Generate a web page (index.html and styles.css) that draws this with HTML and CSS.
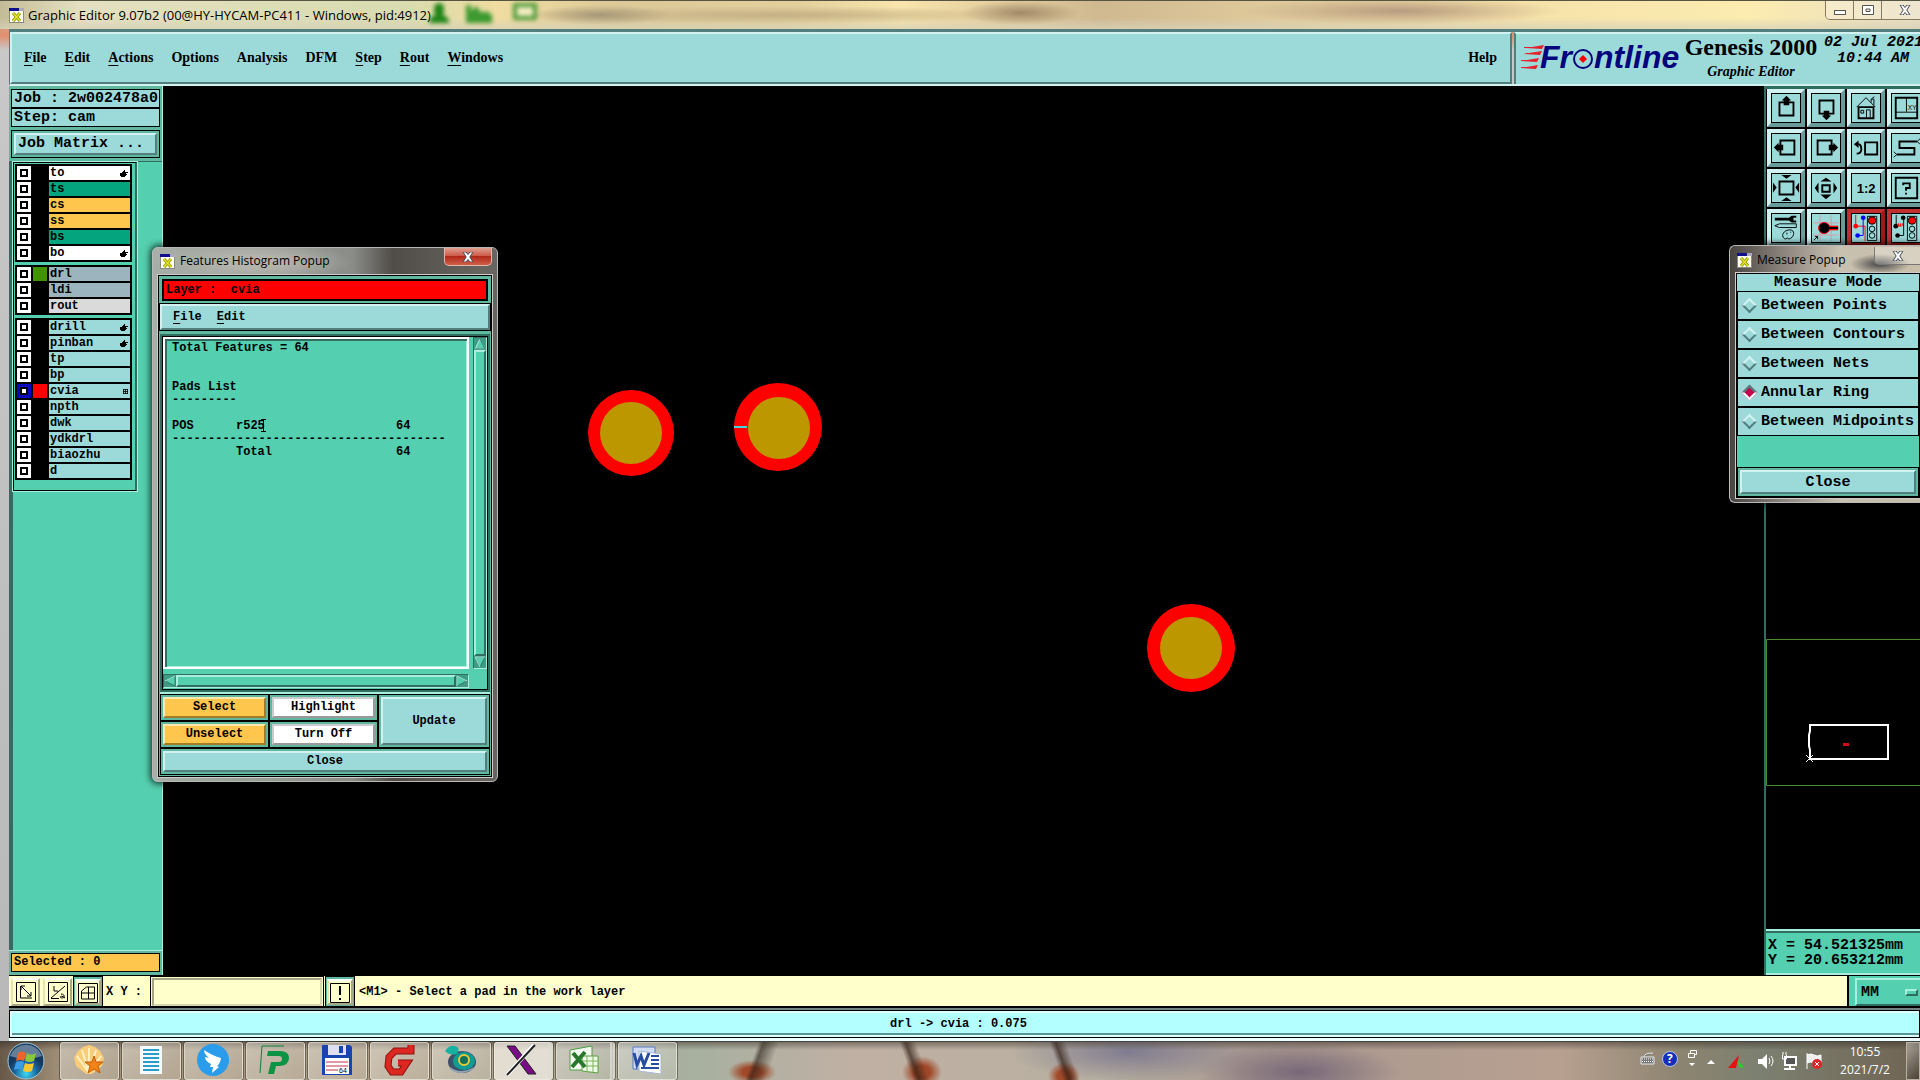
FILE: index.html
```html
<!DOCTYPE html>
<html lang="en">
<head>
  <meta charset="UTF-8">
  <meta name="viewport" content="width=device-width, initial-scale=1">
  <title>Graphic Editor 9.07b2</title>
  <link rel="stylesheet" href="styles.css">
</head>
<body>

<svg width="0" height="0" class="defs">
  <symbol id="xicon" viewBox="0 0 15 15">
    <rect x=".5" y=".5" width="14" height="14" fill="#fffff0" stroke="#888"/>
    <rect width="15" height="3" fill="#10108c"/>
    <rect x="10" width="5" height="3" fill="#aab"/>
    <path d="M4 5l7 8M11 5l-7 8" stroke="#8a8a00" stroke-width="3"/>
    <path d="M4 5l7 8M11 5l-7 8" stroke="#e6e620" stroke-width="1.5"/>
  </symbol>
  <symbol id="hand" viewBox="0 0 9 9">
    <path d="M1 4h2V3h1V2h1V1h1v2h3v1H7v1h1v1H7v1H6v1H2V7H1z"/>
  </symbol>
  <symbol id="cross" viewBox="0 0 12 10">
    <path d="M1 0h3l2 2.500L8 0h3L7.800 5 11 10H8L6 7.500 4 10H1l3.200-5z" fill="#fff" stroke="#444b58"/>
  </symbol>
</svg>

<main class="window">
  <header class="titlebar">
    <svg class="backdrop" width="112" height="28" viewBox="0 0 112 28">
      <path d="M5 8q0-6 5-6t5 6-2 6q7 1 7 8H0q0-7 7-8-2 0-2-6z" fill="#1f8418"/>
      <path d="M37 4v18h26v-8l-6-4-4 2-6-7-5 5V4z" fill="#3c9a30"/>
      <path d="M86 4h20v13H86z" fill="#f4ecc0" stroke="#4c9c3c" stroke-width="4"/>
    </svg>
    <svg class="xicon"><use href="#xicon"/></svg>
    <h1>Graphic Editor 9.07b2 (00@HY-HYCAM-PC411 - Windows, pid:4912)</h1>
    <div class="winbuttons">
      <button aria-label="Minimize"><svg width="12" height="10"><rect x=".5" y="5.500" width="11" height="4" fill="#fff" stroke="#555"/></svg></button>
      <button aria-label="Maximize"><svg width="12" height="10"><path d="M.5.5h11v9H.5zM4 4v2.500h4V4z" fill="#fff" stroke="#555" fill-rule="evenodd"/></svg></button>
      <button aria-label="Close" class="wide"><svg width="12" height="10"><use href="#cross"/></svg></button>
    </div>
  </header>

  <div class="app">
    <div class="top">
      <nav class="menubar">
        <a href="#"><u>F</u>ile</a>
        <a href="#"><u>E</u>dit</a>
        <a href="#"><u>A</u>ctions</a>
        <a href="#">O<u>p</u>tions</a>
        <a href="#">Analysis</a>
        <a href="#">DFM</a>
        <a href="#"><u>S</u>tep</a>
        <a href="#"><u>R</u>out</a>
        <a href="#"><u>W</u>indows</a>
        <a href="#" class="help">Help</a>
      </nav>
      <div class="brand">
        <svg class="logo" width="162" height="40" viewBox="0 0 162 40">
          <g fill="#e8202c"><path d="M6 9l18-3-2 4zM3 15l19-3-2 4zM1 22l18-3-2 4zM1 29l17-3-2 4z"/></g>
          <g stroke="#e8202c"><path d="M4 8.500h18M6 14.500h14M1 21.500h16M1 28.500h15"/></g>
          <text x="20" y="29" class="logo-text">Fr</text>
          <circle cx="63" cy="20" r="9" fill="none" stroke="#04047c" stroke-width="2"/>
          <path d="M63 16l4 4-4 4-4-4z" fill="#f00"/>
          <text x="74" y="29" class="logo-text">ntline</text>
        </svg>
        <div class="product"><b>Genesis 2000</b><i>Graphic Editor</i></div>
        <div class="date"><span>02 Jul 2021</span><span>10:44 AM</span></div>
      </div>
    </div>

    <div class="middle">
      <aside class="sidebar">
        <div class="job">
          <div class="field">Job : 2w002478a0</div>
          <div class="field">Step: cam</div>
          <div class="matrix"><button>Job Matrix ...</button></div>
        </div>
        <div class="well">
          <div class="layers">
            <div class="group">
              <label class="layer"><input type="checkbox"><i></i><span class="white">to<svg><use href="#hand"/></svg></span></label>
              <label class="layer"><input type="checkbox"><i></i><span class="green">ts</span></label>
              <label class="layer"><input type="checkbox"><i></i><span class="orange">cs</span></label>
              <label class="layer"><input type="checkbox"><i></i><span class="orange">ss</span></label>
              <label class="layer"><input type="checkbox"><i></i><span class="green">bs</span></label>
              <label class="layer"><input type="checkbox"><i></i><span class="white">bo<svg><use href="#hand"/></svg></span></label>
            </div>
            <div class="group">
              <label class="layer"><input type="checkbox"><i class="on-green"></i><span class="slate">drl</span></label>
              <label class="layer"><input type="checkbox"><i></i><span class="slate">ldi</span></label>
              <label class="layer"><input type="checkbox"><i></i><span class="grey">rout</span></label>
            </div>
            <div class="group">
              <label class="layer"><input type="checkbox"><i></i><span>drill<svg><use href="#hand"/></svg></span></label>
              <label class="layer"><input type="checkbox"><i></i><span>pinban<svg><use href="#hand"/></svg></span></label>
              <label class="layer"><input type="checkbox"><i></i><span>tp</span></label>
              <label class="layer"><input type="checkbox"><i></i><span>bp</span></label>
              <label class="layer"><input type="checkbox" checked><i class="on-red"></i><span>cvia<svg class="snap" viewBox="0 0 5 5"><path d="M0 .5h5M0 2.500h5M0 4.500h5M.5 0v5M2.500 0v5M4.500 0v5" stroke="#000" stroke-width=".8"/></svg></span></label>
              <label class="layer"><input type="checkbox"><i></i><span>npth</span></label>
              <label class="layer"><input type="checkbox"><i></i><span>dwk</span></label>
              <label class="layer"><input type="checkbox"><i></i><span>ydkdrl</span></label>
              <label class="layer"><input type="checkbox"><i></i><span>biaozhu</span></label>
              <label class="layer"><input type="checkbox"><i></i><span>d</span></label>
            </div>
          </div>
        </div>
        <div class="selected"><div>Selected : 0</div></div>
      </aside>

      <svg class="canvas">
        <g fill="#f00"><circle cx="468" cy="347" r="43"/><circle cx="615" cy="341" r="44"/><circle cx="1028" cy="562" r="44"/></g>
        <g fill="#bc9700"><circle cx="468" cy="347" r="31"/><circle cx="616" cy="342" r="31"/><circle cx="1028" cy="562" r="31"/></g>
        <path d="M571 341h13" stroke="#4ad2da" stroke-width="2"/>
      </svg>

      <aside class="tools">
        <div class="toolgrid">
          <button aria-label="Pan up"><svg viewBox="0 0 30 30"><path class="l2" d="M8 9h15v14H8z"/><path d="M15.500 2l5 5h-2v5h-6V7h-2z"/></svg></button>
          <button aria-label="Pan down"><svg viewBox="0 0 30 30"><path class="l2" d="M8 7h15v14H8z"/><path d="M15.500 28l5-5h-2v-5h-6v5h-2z"/></svg></button>
          <button aria-label="Home"><svg viewBox="0 0 30 30"><path class="l1" d="M5 14L15 4l10 10M20.500 9V5.500h3V12M21 5l3-2"/><path class="l2" d="M7 14h16v12H7z"/><path class="l1" d="M9.500 17.500h3v3h-3zM15.500 25v-8h4v8"/></svg></button>
          <button aria-label="Window layout"><svg viewBox="0 0 30 30"><path class="l2" d="M4 4h23v22H4z"/><path class="l1" d="M15.500 4v15M4 19.500h23"/><text x="17" y="17" class="t6">XY</text></svg></button>

          <button aria-label="Pan left"><svg viewBox="0 0 30 30"><path class="l2" d="M9 7h15v15H9z"/><path d="M2 14.500l5-5v2h5v6H7v2z"/></svg></button>
          <button aria-label="Pan right"><svg viewBox="0 0 30 30"><path class="l2" d="M6 7h15v15H6z"/><path d="M28 14.500l-5-5v2h-5v6h5v2z"/></svg></button>
          <button aria-label="Previous view"><svg viewBox="0 0 30 30"><path class="l2" d="M14 9h13v13H14zM5 11q5-1 5 5 0 5-5 5"/><path d="M2 11l5-4v8z"/></svg></button>
          <button aria-label="Serpentine"><svg viewBox="0 0 30 30"><path class="l2" d="M27 8H8v7h16v7H5"/><path class="l1" d="M30 5l-3 3 3 3M2 19l3 3-3 3"/></svg></button>

          <button aria-label="Zoom out"><svg viewBox="0 0 30 30"><path class="l2" d="M8 8h15v14H8z"/><path d="M10 1h11l-5.500 4zM10 29h11l-5.500-4zM1 9v11l4-5.500zM29 9v11l-4-5.500z"/></svg></button>
          <button aria-label="Zoom in"><svg viewBox="0 0 30 30"><path class="l2" d="M11 12h8v7h-8z"/><path d="M9 8h12l-6-4zM9 22h12l-6 5zM7 9v12l-4-6zM23 9v12l4-6z"/></svg></button>
          <button aria-label="Scale"><svg viewBox="0 0 30 30"><text x="5" y="20" class="t14">1:2</text></svg></button>
          <button aria-label="Query"><svg viewBox="0 0 30 30"><path class="l2" d="M4 4h23v22H4z"/><path class="l2" d="M12 12v-2h7v5h-4v3M15 20v2"/></svg></button>

          <button aria-label="Options"><svg viewBox="0 0 30 30"><path d="M3 4h15l3-2h5v2h-3v3h3v2h-5l-3-2H3z"/><path class="l1" d="M3 12.500l5-2h18v4H8zM13 26c-4-3 0-9 6-9s5 7 1 9-2-1-4 0-2 1-3 0zM16 20v2M20 19v1"/></svg></button>
          <button aria-label="Snap"><svg viewBox="0 0 30 30"><path d="M8.500 1v28M20.500 1v28M1 9.500h28M1 22.500h28" stroke="#d898a0"/><path d="M14 15h14" stroke="#f00" stroke-width="5"/><circle cx="13" cy="15" r="6" stroke="#f00"/><path d="M14 15h14" stroke="#000" stroke-width="2"/><path class="l1" d="M2 28l4-4M3 24h3v3"/></svg></button>
          <button class="red" aria-label="Net on"><svg viewBox="0 0 30 30"><path d="M4 1v12h10v16" stroke="#f00" fill="none"/><path d="M12 5v18H6" stroke="#00f" fill="none"/><circle cx="4" cy="13" r="2.500" fill="#f00"/><circle cx="12" cy="4" r="2.500" fill="#00f"/><circle cx="6" cy="23" r="2.500" fill="#00f"/><path class="l1" d="M16.500 2.500h10v26h-10z"/><circle cx="21.500" cy="7" r="4" fill="#f00" stroke="#000"/><circle class="l1" cx="21.500" cy="16" r="3"/><circle class="l1" cx="21.500" cy="23" r="3"/></svg></button>
          <button class="red" aria-label="Net off"><svg viewBox="0 0 30 30"><path class="l1" d="M4.500 1v13M12.500 5v18H7"/><circle cx="4" cy="13" r="2.500"/><circle cx="12" cy="4" r="2.500"/><circle cx="6" cy="23" r="2.500"/><path d="M6 13h4M7 10v3M9 10v3M11 10v3" stroke="#f00"/><path class="l1" d="M16.500 2.500h10v26h-10z"/><circle cx="21.500" cy="7" r="4" fill="#f00" stroke="#000"/><circle class="l1" cx="21.500" cy="16" r="3"/><circle class="l1" cx="21.500" cy="23" r="3"/></svg></button>
        </div>
        <svg class="overview">
          <path d="M200 .5H.5v146H200" stroke="#4b8c2c" fill="none"/>
          <path d="M44 120v-9l-1-4V96l1-4v-6h78v34z" stroke="#fff" stroke-width="2" fill="none"/>
          <path d="M40 116l7 7M47 116l-7 7" stroke="#fff"/>
          <rect x="77" y="104" width="6" height="3" fill="#d01010"/>
        </svg>
        <div class="coords">X = 54.521325mm<br>Y = 20.653212mm</div>
      </aside>
    </div>

    <div class="prompt">
      <button class="tiny" aria-label="Diagonal"><svg viewBox="0 0 20 20"><path class="l1" d="M.5.5h19v19H.5zM4.500 4v12H16M5 4l10 10M5 8V4h4M15 10v4h-4"/></svg></button>
      <button class="tiny" aria-label="Angle"><svg viewBox="0 0 20 20"><path class="l1" d="M.5.5h19v19H.5zM3 16.500h8M3 16L17 4M6 4v5h4M13 12c4 0 4 4 1 4s-2-4 3 0"/></svg></button>
      <span class="cell"><button class="tiny" aria-label="Grid"><svg viewBox="0 0 20 20"><path class="l1" d="M.5.5h19v19H.5zM3.500 8l5-4h8v12h-13zM3.500 10h13M10.500 4v12"/></svg></button></span>
      <label for="xy">X Y :</label>
      <span class="inputwrap"><input id="xy" type="text"></span>
      <span class="cell"><button class="tiny" aria-label="Alert"><svg viewBox="0 0 20 20"><path class="l1" d="M.5.5h19v19H.5z"/><path class="l2" d="M10 3v9M10 15v2"/></svg></button></span>
      <output>&lt;M1&gt; - Select a pad in the work layer</output>
      <div class="units"><button>MM<i></i></button></div>
    </div>

    <div class="status"><div>drl -&gt; cvia : 0.075</div></div>
  </div>
</main>

<section class="popup histogram">
  <header>
    <svg class="xicon"><use href="#xicon"/></svg>
    <h2>Features Histogram Popup</h2>
    <button class="close" aria-label="Close"><svg width="12" height="10"><use href="#cross"/></svg></button>
  </header>
  <div class="body">
    <div class="layername">Layer :&nbsp; cvia</div>
    <nav><a href="#"><u>F</u>ile</a><a href="#"><u>E</u>dit</a></nav>
    <div class="frame">
      <div class="report">
        <p>Total Features = 64</p>
        <p>&nbsp;</p>
        <p>&nbsp;</p>
        <p>Pads List</p>
        <p>---------</p>
        <p>&nbsp;</p>
        <table>
          <tr><td>POS</td><td>r525<svg class="ibeam" viewBox="0 0 5 13"><path d="M0 .5h5M0 12.500h5M2.500 0v13" stroke="#000"/></svg></td><td>64</td></tr>
          <tr><td colspan="3">--------------------------------------</td></tr>
          <tr><td></td><td>Total</td><td>64</td></tr>
        </table>
      </div>
      <div class="vscroll">
        <svg viewBox="0 0 12 12"><path d="M6 1L1 11h10z" fill="#54cfaf" stroke="#a9efdf"/><path d="M6 1l5 10H1" fill="none" stroke="#2f7868"/></svg>
        <i></i>
        <svg viewBox="0 0 12 12"><path d="M1 1h10L6 11z" fill="#54cfaf" stroke="#2f7868"/><path d="M11 1H1l5 10" fill="none" stroke="#a9efdf"/></svg>
      </div>
      <div class="hscroll">
        <svg viewBox="0 0 12 12"><path d="M1 6l10-5v10z" fill="#54cfaf" stroke="#2f7868"/><path d="M1 6l10-5" stroke="#a9efdf"/></svg>
        <i></i>
        <svg viewBox="0 0 12 12"><path d="M11 6L1 1v10z" fill="#54cfaf" stroke="#2f7868"/><path d="M1 11V1l10 5" fill="none" stroke="#a9efdf"/></svg>
      </div>
    </div>
    <div class="actions">
      <div><button class="orange">Select</button></div>
      <div><button class="white">Highlight</button></div>
      <div class="tall"><button>Update</button></div>
      <div><button class="orange">Unselect</button></div>
      <div><button class="white">Turn Off</button></div>
      <div class="full"><button>Close</button></div>
    </div>
  </div>
</section>

<section class="popup measure">
  <header>
    <svg class="xicon"><use href="#xicon"/></svg>
    <h2>Measure Popup</h2>
    <button class="close glass" aria-label="Close"><svg width="12" height="10"><use href="#cross"/></svg></button>
  </header>
  <div class="body">
    <h3>Measure Mode</h3>
    <label><input type="radio" name="mode">Between Points</label>
    <label><input type="radio" name="mode">Between Contours</label>
    <label><input type="radio" name="mode">Between Nets</label>
    <label><input type="radio" name="mode" checked>Annular Ring</label>
    <label><input type="radio" name="mode">Between Midpoints</label>
    <div class="closebox"><button>Close</button></div>
  </div>
</section>

<footer class="taskbar">
  <button class="start" aria-label="Start">
    <svg width="38" height="38" viewBox="0 0 38 38">
      <defs><radialGradient id="orb" cy=".85"><stop offset="0" stop-color="#3fd8f4"/><stop offset=".6" stop-color="#1b69a0"/><stop offset="1" stop-color="#123a60"/></radialGradient></defs>
      <circle cx="19" cy="19" r="18" fill="url(#orb)" stroke="#a8c4d4"/>
      <path d="M3 14a17 17 0 0 1 32 0q-16 6-32 0z" fill="#fff" opacity=".35"/>
      <path d="M11 11q4-3 8 0l-2 8q-4-2-8 0z" fill="#f0642c"/><path d="M20 11q4 3 9 0l-2 8q-4 2-9 0z" fill="#8cc63c"/>
      <path d="M9 20q4-2 8 0l-2 8q-4-2-8 0z" fill="#3c9ce4"/><path d="M18 21q4 2 9 0l-2 8q-4 2-9 0z" fill="#fcc830"/>
    </svg>
  </button>
  <div class="tasks">
    <button aria-label="Shell"><svg viewBox="0 0 32 32"><path d="M13 30L3 22 1 14l4-7 5-4 6-2 6 2 5 4 4 7-2 8-10 8z" fill="#f8cc78"/><path d="M16 29L4 12M16 29L9 6M16 29V4M16 29l7-23M16 29l12-17" stroke="#fff2c0" stroke-width="2"/><path d="M21 12l2 6h7l-5 4 2 7-6-4-6 4 2-7-5-4h7z" fill="#f08418" stroke="#c05c08"/></svg></button>
    <button aria-label="Text file"><svg viewBox="0 0 32 32"><path d="M5 2h22v28H5z" fill="#f4fafc"/><path d="M8 6h16M8 10h16M8 14h16M8 18h16M8 22h16M8 26h16" stroke="#2c9cc8" stroke-width="2"/></svg></button>
    <button aria-label="DingTalk"><svg viewBox="0 0 32 32"><circle cx="16" cy="16" r="16" fill="#2a9cec"/><path d="M7 6q9 6 17 8-1 6-4 8l2 1-7 6 1-6h-3l1-3q-6-3-6-7l4 1q-5-4-5-8z" fill="#fff"/></svg></button>
    <button aria-label="P"><svg viewBox="0 0 32 32"><path d="M1 29L3 2h22" stroke="#08843c" fill="none"/><path d="M9 7h12q9 0 9 7t-9 8h-4l-2 8H9l3-12h8q3 0 3-3t-3-3H8z" fill="#0c9444"/></svg></button>
    <button aria-label="Save"><svg viewBox="0 0 32 32"><path d="M1 1h28l2 2v28H1z" fill="#1844b0"/><path d="M7 1h18v10H7z" fill="#dce0f0"/><path d="M18 2h4v7h-4z" fill="#1844b0"/><path d="M4 14h24v16H4z" fill="#fff"/><path d="M5 18h22M5 22h22M5 26h12" stroke="#c03048"/><text x="18" y="29" class="t6">64</text></svg></button>
    <button aria-label="G"><svg viewBox="0 0 32 32"><path d="M28 1v6H12l-6 6-1 9 4 6h9l6-9h-9" fill="none" stroke="#8c1010" stroke-width="7"/><path d="M28 1v6H12l-6 6-1 9 4 6h9l6-9h-9" fill="none" stroke="#dc2820" stroke-width="5"/></svg></button>
    <button aria-label="Viewer"><svg viewBox="0 0 32 32"><ellipse cx="17" cy="18" rx="14" ry="11" fill="#3c5068"/><ellipse cx="19" cy="17" rx="11" ry="9" fill="#109c94"/><circle cx="19" cy="16" r="5" fill="#107060" stroke="#e8c830" stroke-width="2"/><path d="M0 7q4-6 10-5t2 8q-7 2-12-3z" fill="#18b0a0"/><path d="M5 24q10 8 24 0" fill="none" stroke="#90a4b4" stroke-width="2"/></svg></button>
    <button class="active stack" aria-label="X server"><svg viewBox="0 0 32 32"><path d="M2 2h8l21 28h-8z" fill="#780c84" stroke="#222"/><path d="M29 1L2 31" stroke="#fff" stroke-width="4"/><path d="M30 1L2 31" stroke="#222" stroke-width="2"/></svg></button>
    <button class="stack" aria-label="Spreadsheet"><svg viewBox="0 0 32 32"><path d="M3 6l22-4v24H3z" fill="#f4faf0" stroke="#4c9c44"/><path d="M15 12h16v17l-16-2z" fill="#eef8e8" stroke="#58a040"/><path d="M15 17h16M15 22h16M20 12v16M26 12v16" stroke="#78b858"/><path d="M6 9l12 14M18 8L5 23" stroke="#28782c" stroke-width="4"/></svg></button>
    <button aria-label="Word processor"><svg viewBox="0 0 32 32"><path d="M2 3h22v22H2z" fill="#d0dcf4" stroke="#5878c0"/><path d="M8 7l22 3v20L8 27z" fill="#fff" stroke="#aab8d8"/><path d="M3 9l3 12 4-9 3 9 5-12" fill="none" stroke="#284ca0" stroke-width="3"/><path d="M20 12h8M20 16h8M20 20h8M10 24h18" stroke="#284ca0" stroke-width="2"/></svg></button>
  </div>
  <div class="tray">
    <svg width="186" height="24" viewBox="0 0 186 24">
      <path d="M3 8h13v7H3zM6 8q0-4 9-4" fill="#777" stroke="#e8e8e8"/><path d="M4 10h11M4 12.500h11" stroke="#fff" stroke-dasharray="1 1"/>
      <circle cx="32" cy="10" r="7.500" fill="#1430b8" stroke="#b8c4e8"/><text x="29" y="14" class="q">?</text>
      <path d="M50.500 4.500h6v4h-6zM52.500 4V1.500h6v4h-2" fill="none" stroke="#fff"/><path d="M51 14h6l-3 3zM69 15h8l-4-4z" fill="#fff"/>
      <path d="M90 19l11-13-3 13z" fill="#e81010"/><path d="M100 11l6 8-5-1z" fill="#20d820"/>
      <path d="M120 10h4l5-5v15l-5-5h-4z" fill="#fff"/><path d="M131 9q2 3 0 6M133 7q4 5 0 10" fill="none" stroke="#fff"/>
      <path d="M147 8h11v8h-11zM146 20h11M152 16v4" fill="#555" stroke="#fff" stroke-width="2"/><path d="M144.500 6v4h4V6M145 3v3M148 3v3" stroke="#fff" fill="none"/>
      <path d="M169 4v16M169 6q4-2 7 0t7 0v8q-4 2-7 0t-7 0" fill="#eee" stroke="#fff"/><circle cx="179" cy="15" r="5" fill="#d82828"/><path d="M177 13l4 4M181 13l-4 4" stroke="#fff"/>
    </svg>
    <time>10:55<br>2021/7/2</time>
    <button class="desktop" aria-label="Show desktop"></button>
  </div>
</footer>

</body>
</html>
```
FILE: styles.css
```css
*, *:after, *:before {
  box-sizing: border-box;
}
:root {
  --face: #9cdada;
  --lite: #d2f2f2;
  --dark: #527e7e;
  --teal: #54cfaf;
  --teal-lite: #a9efdf;
  --teal-dark: #2f6e60;
  --teal-mid: #60b8a0;
  --cream: #ffffcc;
  --orange: #ffc64d;
}
body {
  background: #000;
  color: #000;
  display: flex;
  flex-direction: column;
  font: bold 12px/13px "Liberation Mono", monospace;
  height: 100vh;
  margin: 0;
  overflow: hidden;
}
h1, h2, h3, p {
  font: inherit;
  margin: 0;
}
a {
  color: inherit;
  text-decoration: none;
}
u {
  text-underline-offset: 3px;
}
button {
  background: var(--face);
  border: 2px solid;
  border-color: var(--lite) var(--dark) var(--dark) var(--lite);
  border-radius: 0;
  color: inherit;
  font: inherit;
  padding: 0;
}
svg {
  display: block;
}
.defs {
  position: absolute;
}
.l1 {
  fill: none;
  stroke: #000;
}
.l2 {
  fill: none;
  stroke: #000;
  stroke-width: 2;
}
.t6 {
  font: 7px "Liberation Sans", sans-serif;
}
.t14 {
  font: bold 14px "Liberation Sans", sans-serif;
}
.xicon {
  flex: none;
  height: 15px;
  width: 15px;
}
.white {
  background: #fff;
}
.green {
  background: #04a57e;
}
.orange {
  background: var(--orange);
}
.slate {
  background: #9cb4be;
}
.grey {
  background: #dadada;
}

/* main window */
.window {
  background: linear-gradient(#c8b49a, #e09070 36px, #c8c8c8 50px, #b8b8b8);
  display: flex;
  flex: 1;
  flex-direction: column;
  min-height: 0;
}
.titlebar {
  align-items: center;
  background:
    radial-gradient(70px 10px at 600px 14px, #a89878, transparent),
    radial-gradient(260px 9px at 780px 14px, #c4b084, transparent),
    radial-gradient(60px 12px at 1020px 12px, #a08868, transparent),
    radial-gradient(160px 14px at 1400px 10px, #b89c80, transparent),
    linear-gradient(transparent 60%, rgba(215, 210, 185, .8)),
    linear-gradient(90deg, #c4bc98, #e4e0c0 80px, #d8dcb0 400px, #f0dca0 500px, #dcc898 620px, #e4d09c 800px, #f8e4ac 900px, #d0b890 1100px, #f4e0a8 1480px, #fcecb0 1750px, #e8dcc0);
  border-top: 1px solid #554;
  display: flex;
  flex: none;
  gap: 4px;
  height: 29px;
  padding-left: 9px;
}
.backdrop {
  filter: blur(2px);
  left: 429px;
  position: absolute;
  top: 1px;
}
.titlebar h1, .popup h2 {
  flex: 1;
  font: 13px/16px "Open Sans", sans-serif;
  padding-bottom: 1px;
  white-space: nowrap;
}
.popup h2 {
  font-size: 12px;
}
.winbuttons {
  align-self: flex-start;
  border: 1px solid #887a60;
  border-radius: 0 0 0 5px;
  border-width: 0 0 1px 1px;
  display: flex;
  height: 19px;
}
.winbuttons button {
  align-items: center;
  background: rgba(255, 255, 255, .25);
  border: 0;
  border-right: 1px solid #887a60;
  display: flex;
  justify-content: center;
  width: 28px;
}
.winbuttons .wide {
  border: 0;
  padding-left: 8px;
  width: 38px;
}
.app {
  display: flex;
  flex: 1;
  flex-direction: column;
  margin-left: 9px;
  min-height: 0;
}
.top {
  border-bottom: 2px solid var(--lite);
  border-left: 1px solid var(--dark);
  border-top: 3px solid var(--dark);
  display: flex;
  flex: none;
  height: 57px;
}
.menubar {
  align-items: center;
  background: var(--face);
  border: 2px solid;
  border-color: var(--lite) var(--dark) var(--dark) var(--lite);
  display: flex;
  flex: 1;
  font: bold 14px/18px "Liberation Serif", serif;
  gap: 18px;
  padding: 0 13px 1px 12px;
}
.help {
  margin-left: auto;
}
.brand {
  background: var(--face);
  border-left: 2px solid var(--dark);
  border-top: 2px solid var(--lite);
  display: flex;
  flex: none;
  margin-left: 2px;
  overflow: hidden;
  width: 406px;
}
.logo {
  flex: none;
  margin: 5px 0 0 4px;
}
.logo-text {
  fill: #04047c;
  font: italic bold 32px "Liberation Sans", sans-serif;
}
.product {
  flex: none;
  font-family: "Liberation Serif", serif;
  text-align: center;
  white-space: nowrap;
  width: 138px;
}
.product b {
  display: block;
  font-size: 24px;
  line-height: 26px;
}
.product i {
  display: block;
  font-size: 14px;
  line-height: 24px;
}
.date {
  flex: none;
  font: italic bold 15px/16px "Liberation Mono", monospace;
  padding: 1px 0 0 4px;
}
.date span {
  display: block;
}
.date span + span {
  padding-left: 13px;
}

.middle {
  background: #000;
  display: flex;
  flex: 1;
  min-height: 0;
}
.sidebar {
  background: var(--teal);
  border-right: 1px solid var(--teal-lite);
  display: flex;
  flex: none;
  flex-direction: column;
  width: 154px;
}
.job {
  background: var(--teal-mid);
  border-bottom: 1px solid var(--teal-dark);
  font-size: 15px;
  padding: 3px 2px 3px;
}
.job .field {
  background: var(--face);
  border: 1px solid #000;
  height: 19px;
  line-height: 17px;
  padding-left: 2px;
  white-space: nowrap;
}
.matrix {
  border: 1px solid #000;
  margin-top: 3px;
  padding: 2px;
}
.matrix button {
  display: block;
  height: 22px;
  line-height: 18px;
  padding-left: 2px;
  text-align: left;
  width: 100%;
}
.well {
  border-left: 4px solid var(--teal-dark);
  flex: 1;
}
.layers {
  border: 1px solid #000;
  border-right: 2px solid var(--teal-dark);
  outline: 1px solid var(--teal-lite);
  padding: 1px 3px 7px 1px;
  width: 124px;
}
.group {
  background: #000;
  display: grid;
  gap: 2px;
  margin-bottom: 3px;
  padding: 2px;
}
.layer {
  display: grid;
  gap: 2px;
  grid-template-columns: 14px 14px 1fr;
  height: 14px;
}
.layer input {
  appearance: none;
  background: #fff;
  border: 3px solid #fff;
  box-shadow: inset 0 0 0 2px #000;
  height: 14px;
  margin: 0;
  width: 14px;
}
.layer input:checked {
  border-color: #0808c0;
}
.on-green {
  background: #419400;
}
.on-red {
  background: #f00;
}
.layer span {
  align-items: center;
  display: flex;
  justify-content: space-between;
  padding: 0 2px 0 1px;
}
.layer span:not([class]) {
  background: var(--face);
}
.layer svg {
  height: 9px;
  width: 9px;
}
.layer .snap {
  height: 5px;
  width: 5px;
}
.selected {
  background: var(--teal-mid);
  border-top: 1px solid var(--teal-lite);
  padding: 2px 2px 3px;
}
.selected div {
  background: var(--orange);
  border: 1px solid #000;
  line-height: 17px;
  padding-left: 2px;
}
.canvas {
  flex: 1;
  height: 100%;
  min-width: 0;
}
.tools {
  border-left: 2px solid var(--teal-dark);
  display: flex;
  flex: none;
  flex-direction: column;
  overflow: hidden;
  width: 156px;
}
.toolgrid {
  border-top: 3px solid var(--teal-dark);
  display: grid;
  gap: 2px;
  grid-template-columns: repeat(4, 38px);
  padding-left: 1px;
}
.toolgrid button {
  border-width: 4px;
  border-color: var(--lite) #6a9c9c #6a9c9c var(--lite);
  height: 38px;
}
.toolgrid svg {
  border: 1px solid #000;
  height: 30px;
  width: 30px;
}
.toolgrid .red {
  border-color: #c03030 #a01818 #a01818 #c03030;
}
.overview {
  height: 148px;
  margin-bottom: 142px;
  margin-top: auto;
  width: 100%;
}
.coords {
  background: var(--teal);
  border-bottom: 2px solid var(--teal-lite);
  border-top: 2px solid var(--teal-lite);
  box-shadow: inset 0 2px var(--teal-dark);
  font-size: 15px;
  line-height: 15px;
  padding: 7px 2px 5px;
}

.prompt {
  align-items: stretch;
  background: var(--cream);
  border-top: 1px solid #000;
  display: flex;
  flex: none;
  height: 33px;
}
.prompt .tiny {
  background: var(--cream);
  border-color: #fff #a8a888 #a8a888 #e4e4b4;
  margin: 2px 1px 2px 2px;
  padding: 2px 3px;
  width: 29px;
}
.tiny svg {
  height: 20px;
  width: 20px;
}
.prompt .cell {
  background: var(--teal-mid);
  border: 1px solid #000;
  display: flex;
}
.prompt .cell .tiny {
  margin: 2px 1px;
  padding: 2px 1px;
  width: 26px;
}
.prompt label {
  align-self: center;
  padding: 0 8px 0 3px;
}
.inputwrap {
  border: 1px solid #000;
  display: flex;
  margin-right: 1px;
  padding: 1px;
}
.inputwrap input {
  background: var(--cream);
  border: 2px solid;
  border-color: #a4a484 #d8d8ac #d8d8ac #a4a484;
  font: inherit;
  outline: 0;
  width: 170px;
}
.prompt output {
  align-self: center;
  flex: 1;
  padding-left: 4px;
}
.units {
  background: var(--teal);
  border-left: 2px solid #000;
  overflow: hidden;
  padding: 2px 0 2px 6px;
  width: 73px;
}
.units button {
  align-items: center;
  background: none;
  border-color: var(--teal-lite) var(--teal-dark) var(--teal-dark) var(--teal-lite);
  display: flex;
  font-size: 15px;
  gap: 26px;
  height: 28px;
  padding-left: 4px;
  width: 70px;
}
.units i {
  border: 2px solid;
  border-color: var(--teal-lite) var(--teal-dark) var(--teal-dark) var(--teal-lite);
  flex: none;
  height: 7px;
  width: 13px;
}
.status {
  background: #b3ffff;
  border-bottom: 3px solid #eff;
  border-top: 2px solid #708484;
  box-shadow: 0 -2px #000;
  flex: none;
  height: 33px;
}
.status div {
  border: 1px solid #000;
  box-shadow: inset 0 2px #dff, inset 2px 0 #dff, inset 0 -2px #dff, inset 0 -4px #5c9494;
  height: 28px;
  line-height: 27px;
  padding-right: 12px;
  text-align: center;
}

/* popups */
.popup {
  border: 1px solid #b8b8b8;
  border-radius: 6px;
  box-shadow: 0 0 6px 2px rgba(0, 0, 0, .7);
  position: absolute;
}
.popup header {
  align-items: center;
  display: flex;
  gap: 5px;
  height: 26px;
  padding-left: 2px;
}
.popup .body {
  background: var(--teal-mid);
  outline: 1px solid #ccc;
}
.popup .close {
  align-items: center;
  align-self: flex-start;
  background: linear-gradient(#e0a090, #cc5444 50%, #b02818 50%, #d06048);
  border: 1px solid #e0b8b0;
  border-radius: 0 0 5px 5px;
  border-top: 0;
  display: flex;
  height: 18px;
  justify-content: center;
  width: 48px;
}
.histogram {
  background:
    radial-gradient(100px 20px at 100px 14px, #b4b4ac 30%, transparent),
    linear-gradient(90deg, #a8aea8, #8a8c88 200px, #504c48 240px, #686460 330px);
  left: 152px;
  padding: 0 5px 4px;
  top: 247px;
  width: 346px;
}
.histogram .body {
  border: 1px solid #000;
  margin-top: 1px;
  padding: 3px 1px 1px;
}
.layername {
  background: #f00;
  border: 2px solid #000;
  height: 22px;
  line-height: 18px;
  margin: 0 2px 3px;
  padding-left: 2px;
}
.histogram nav {
  background: var(--face);
  border: 2px solid;
  border-color: var(--lite) var(--dark) var(--dark) var(--lite);
  display: flex;
  gap: 15px;
  height: 26px;
  line-height: 22px;
  outline: 1px solid #000;
  padding-left: 11px;
}
.frame {
  background: var(--teal);
  border: 1px solid #000;
  box-shadow: 0 0 0 2px var(--teal-dark), 0 3px 0 2px var(--teal-lite);
  display: grid;
  gap: 5px 4px;
  grid-template-columns: 1fr 14px;
  grid-template-rows: 332px 14px;
  margin: 6px 2px 4px;
  padding-bottom: 1px;
}
.report {
  border: 2px solid #fff;
  box-shadow: inset 2px 2px var(--teal-dark), inset -1px -1px var(--teal-lite);
  padding: 3px 7px;
}
.report table {
  border-collapse: collapse;
  table-layout: fixed;
  width: 280px;
}
.report td {
  padding: 0;
  white-space: nowrap;
  width: 64px;
}
.report td + td {
  width: 160px;
}
.report td + td + td {
  width: auto;
}
.ibeam {
  display: inline-block;
  height: 13px;
  margin: -2px 0 -3px -4px;
  vertical-align: baseline;
  width: 5px;
}
.vscroll, .hscroll {
  background: #3c9c84;
  border: 1px solid;
  border-color: var(--teal-dark) var(--teal-lite) var(--teal-lite) var(--teal-dark);
  display: flex;
}
.vscroll {
  flex-direction: column;
}
.vscroll svg, .hscroll svg {
  flex: none;
  height: 12px;
  width: 12px;
}
.vscroll i, .hscroll i {
  background: var(--teal);
  border: 2px solid;
  border-color: var(--teal-lite) var(--teal-dark) var(--teal-dark) var(--teal-lite);
  flex: 1;
}
.actions {
  background: #000;
  border: 1px solid #000;
  display: grid;
  gap: 2px;
  grid-template-columns: 107px 107px 1fr;
  grid-template-rows: 25px 25px 25px;
}
.actions div {
  background: var(--teal-mid);
  display: grid;
  padding: 2px;
}
.actions .orange {
  background: var(--orange);
  border-color: #ffe8ac #a47c24 #a47c24 #ffe8ac;
}
.actions .white {
  background: #fff;
  border-color: #ccc #999 #999 #ccc;
}
.actions .tall {
  grid-row: span 2;
}
.actions .full {
  grid-column: span 3;
}

.measure {
  background:
    radial-gradient(30px 10px at 150px 18px, #444, transparent),
    linear-gradient(90deg, #484440, #948c84 60px, #c8c0b0 110px, #c8bea8);
  border-right: 0;
  border-radius: 6px 0 0 6px;
  padding: 1px 0 4px 6px;
  right: 0;
  top: 245px;
  width: 191px;
}
.measure header {
  padding-left: 1px;
}
.measure .close.glass {
  background: rgba(255, 255, 255, .3);
  border-color: #777;
  border-right: 0;
  border-radius: 0 0 0 5px;
  width: 46px;
}
.measure .body {
  background: var(--teal);
  border: 1px solid #000;
  font-size: 15px;
  overflow: hidden;
}
.measure h3 {
  background: var(--face);
  height: 17px;
  line-height: 17px;
  text-align: center;
}
.measure label {
  align-items: center;
  background: var(--face);
  border: 1px solid #000;
  display: flex;
  gap: 6px;
  height: 29px;
  padding-left: 6px;
  white-space: nowrap;
}
.measure input {
  appearance: none;
  border: 2px solid;
  border-color: var(--lite) var(--dark) var(--dark) var(--lite);
  flex: none;
  height: 11px;
  margin: 0;
  transform: rotate(45deg);
  width: 11px;
}
.measure input:checked {
  background: #c4044c;
  border-color: var(--dark) #fff #fff var(--dark);
}
.closebox {
  background: var(--teal-mid);
  border: 1px solid #000;
  margin-top: 31px;
  padding: 2px;
}
.closebox button {
  display: block;
  height: 24px;
  width: 100%;
}

/* taskbar */
.taskbar {
  align-items: stretch;
  background:
    linear-gradient(rgba(60, 50, 40, .5), transparent 8px),
    linear-gradient(110deg, transparent 55px, rgba(40, 30, 20, .6) 60px, transparent 75px) 700px 0 / 120px 39px no-repeat,
    linear-gradient(70deg, transparent 50px, rgba(50, 30, 20, .7) 56px, transparent 66px) 860px 0 / 120px 39px no-repeat,
    linear-gradient(70deg, transparent 50px, rgba(50, 30, 20, .7) 56px, transparent 66px) 1010px 0 / 120px 39px no-repeat,
    radial-gradient(24px 12px at 752px 30px, #a04828 40%, transparent),
    radial-gradient(20px 16px at 922px 30px, #a04828 40%, transparent),
    radial-gradient(16px 14px at 1064px 34px, #a04828 40%, transparent),
    radial-gradient(120px 30px at 1130px 10px, #807c90, transparent),
    radial-gradient(100px 30px at 1300px 30px, #786878, transparent),
    linear-gradient(90deg, #685848, #a09078 60px, #b0a088 400px, #a8b0a0 700px, #c0b0a4 850px, #b8b0a0 1100px, #a89890 1250px, #b8a090 1560px, #8c8470 1680px, #7c8070 1760px, #706454);
  border-top: 1px solid #444;
  display: flex;
  flex: none;
  height: 39px;
}
.start {
  background: none;
  border: 0;
  padding-left: 7px;
  width: 60px;
}
.tasks {
  display: flex;
  flex: 1;
  gap: 3px;
}
.tasks button {
  align-items: center;
  background: linear-gradient(135deg, rgba(255, 255, 255, .4), rgba(255, 255, 255, .15));
  border: 1px solid rgba(240, 240, 230, .6);
  border-radius: 3px;
  box-shadow: 0 0 0 1px rgba(50, 40, 30, .5);
  display: flex;
  justify-content: center;
  padding: 0 2px 2px 0;
  width: 59px;
}
.tasks .active {
  background: rgba(255, 250, 245, .65);
}
.tasks .stack {
  border-right: 5px double rgba(220, 220, 210, .7);
}
.tasks svg {
  height: 32px;
  width: 32px;
}
.tray {
  align-items: center;
  display: flex;
}
.q {
  fill: #fff;
  font: bold 12px "Open Sans", sans-serif;
}
.tray time {
  color: #fff;
  font: 12px/18px "Open Sans", sans-serif;
  margin: 0 2px;
  text-align: center;
  width: 78px;
}
.desktop {
  align-self: stretch;
  background: linear-gradient(135deg, rgba(255, 255, 255, .4), rgba(40, 30, 20, .5));
  border: 1px solid #b8b0a0;
  width: 14px;
}
```
